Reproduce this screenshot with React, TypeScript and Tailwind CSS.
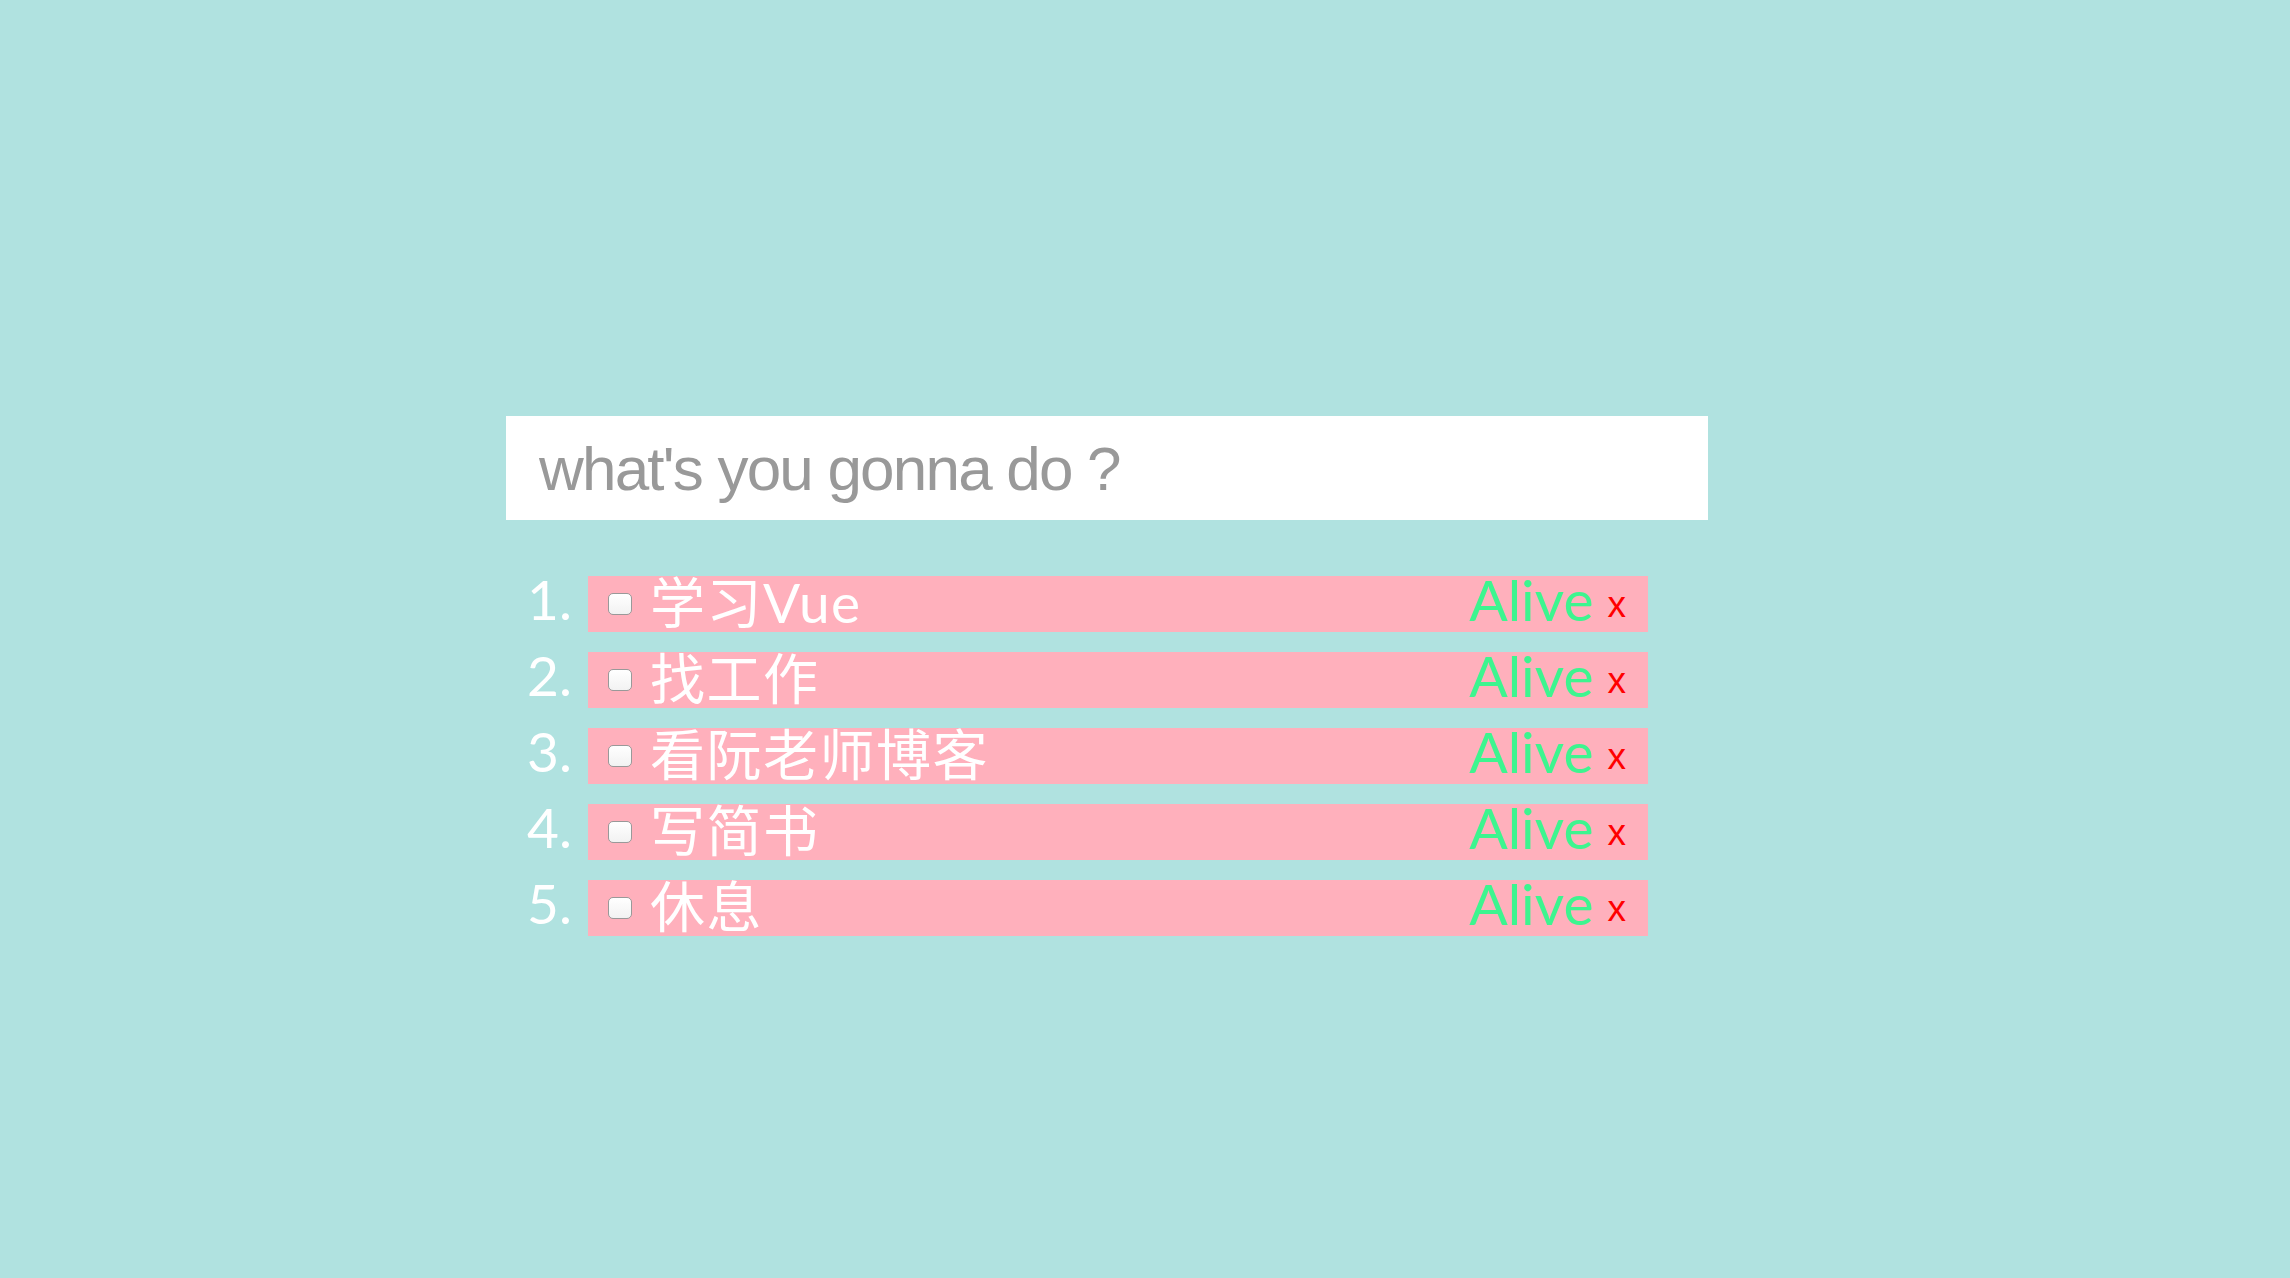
import { useState } from "react";

const initialTodos = [
  { id: 1, title: "学习Vue", done: false },
  { id: 2, title: "找工作", done: false },
  { id: 3, title: "看阮老师博客", done: false },
  { id: 4, title: "写简书", done: false },
  { id: 5, title: "休息", done: false },
];

export default function App() {
  const [todos, setTodos] = useState(initialTodos);
  const [text, setText] = useState("");

  const toggle = (id: number) =>
    setTodos(todos.map((t) => (t.id === id ? { ...t, done: !t.done } : t)));
  const remove = (id: number) => setTodos(todos.filter((t) => t.id !== id));

  return (
    <div className="min-h-screen w-full bg-[#b0e2e0] pt-[416px] pl-[506px]">
      <div className="w-[1202px]">
        {/* input */}
        <input
          value={text}
          onChange={(e) => setText(e.target.value)}
          placeholder="what's you gonna do ?"
          className="block w-full h-[104px] bg-white pl-[33px] text-[62px] tracking-[-1.8px] text-[#999] outline-none placeholder:text-[#999] font-['Liberation_Sans',sans-serif]"
        />

        {/* todo list */}
        <ol className="mt-[56px] pr-[60px] text-white font-['Lato','Noto_Sans_CJK_SC',sans-serif] text-[55px] leading-[56px]">
          {todos.map((t, i) => (
            <li key={t.id} className="flex mb-[20px] h-[56px]">
              <span className="w-[82px] shrink-0 text-right pr-[16px] leading-[46px]">{i + 1}.</span>
              <div className="flex items-center flex-1 bg-[#ffb0bc] pl-[20px] pr-[22px]">
                <input
                  type="checkbox"
                  checked={t.done}
                  onChange={() => toggle(t.id)}
                  className="appearance-none w-[24px] h-[22px] rounded-[5px] border border-[#999] bg-gradient-to-b from-white to-[#f2f2f2] shrink-0 checked:bg-[#3b82f6]"
                />
                <span className="ml-[18px] mb-[4px] whitespace-nowrap tracking-[1.5px]">{t.title}</span>
                <span className="ml-auto mb-[10px] text-[#3df58f] text-[57px]">Alive</span>
                <button
                  onClick={() => remove(t.id)}
                  className="ml-[14px] text-[#ff0000] text-[37px] leading-none font-['Liberation_Sans',sans-serif]"
                >
                  x
                </button>
              </div>
            </li>
          ))}
        </ol>
      </div>
    </div>
  );
}
